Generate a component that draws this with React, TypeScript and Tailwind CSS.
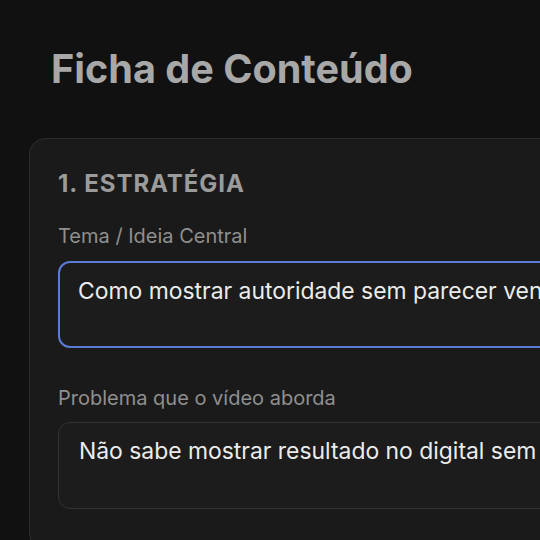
import React from "react";

const fieldClass =
  "block w-full h-[87px] resize-none rounded-xl bg-[#1c1c1c] px-5 pt-3 text-[22.9px] leading-[1.45] text-[#ececec] outline-none whitespace-nowrap overflow-hidden";

export default function App() {
  return (
    <div
      className="min-h-screen w-full overflow-hidden bg-[#111111] pt-[46px] pl-[29px]"
      style={{ fontFamily: "Inter, 'Noto Sans', sans-serif" }}
    >
      <h1 className="ml-[22px] text-[39.6px] font-bold leading-[1.2] text-[#a8a8a8]">
        Ficha de Conteúdo
      </h1>

      <div className="mt-[44px] w-[1000px] rounded-2xl border border-[#2c2c2c] bg-[#1a1a1a] px-7 pt-[29px] pb-10">
        {/* Estratégia */}
        <h2 className="text-[24px] font-bold uppercase leading-8 tracking-[0.04em] text-[#9b9b9b]">
          1. Estratégia
        </h2>

        <div className="mt-[22px]">
          <label className="block text-[20px] leading-7 text-[#8f8f8f]">
            Tema / Ideia Central
          </label>
          <div className={`mt-[11px] border-2 border-[#5a7cd6] pl-[18px] ${fieldClass}`}>
            Como mostrar autoridade sem parecer vendedor no Instagram
          </div>
        </div>

        <div className="mt-[36px]">
          <label className="block text-[20px] leading-7 text-[#8f8f8f]">
            Problema que o vídeo aborda
          </label>
          <div className={`mt-[10px] border border-[#333333] ${fieldClass}`}>
            Não sabe mostrar resultado no digital sem parecer arrogante
          </div>
        </div>
      </div>
    </div>
  );
}
